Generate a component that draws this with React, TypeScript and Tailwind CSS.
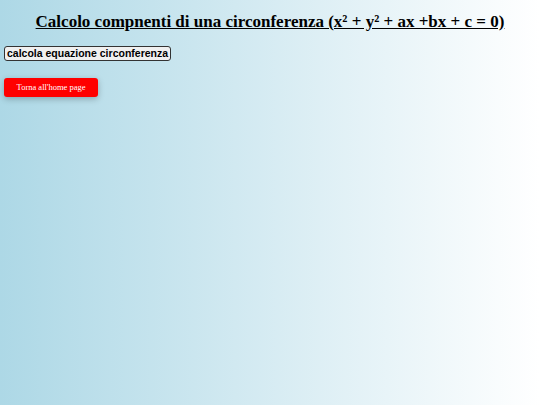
export default function App() {
  return (
    <div className="min-h-[405px] w-full bg-gradient-to-r from-[#add8e6] to-white">
      <h1 className="pt-[12px] text-center font-['Liberation_Serif',serif] text-[17px] leading-[20px] font-bold text-black underline">
        Calcolo compnenti di una circonferenza (x² + y² + ax +bx + c = 0)
      </h1>
      <div className="mt-[14px] flex px-1">
        <button className="rounded-[3px] border border-[#333] bg-[#f0f0f0] px-[2px] font-['Liberation_Sans',sans-serif] text-[10.5px] leading-[13px] font-bold text-black">
          calcola equazione circonferenza
        </button>
      </div>
      <div className="mt-[17px] flex px-1">
        <button className="h-[19px] w-[94px] rounded-[3px] bg-[#ff0000] font-['Liberation_Serif',serif] text-[8.5px] text-white shadow-[0_2px_6px_rgba(0,0,0,0.25)]">
          Torna all'home page
        </button>
      </div>
    </div>
  );
}
